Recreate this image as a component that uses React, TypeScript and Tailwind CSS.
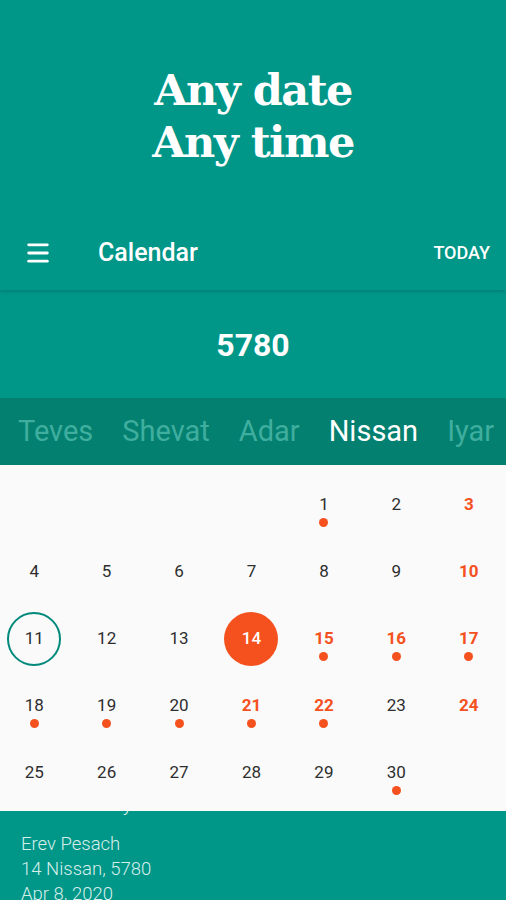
import { Menu } from 'lucide-react';

type Day = { n: number; holiday?: boolean; dot?: boolean; today?: boolean; selected?: boolean };

const weeks: (Day | null)[][] = [
  [null, null, null, null, { n: 1, dot: true }, { n: 2 }, { n: 3, holiday: true }],
  [{ n: 4 }, { n: 5 }, { n: 6 }, { n: 7 }, { n: 8 }, { n: 9 }, { n: 10, holiday: true }],
  [
    { n: 11, today: true },
    { n: 12 },
    { n: 13 },
    { n: 14, selected: true },
    { n: 15, holiday: true, dot: true },
    { n: 16, holiday: true, dot: true },
    { n: 17, holiday: true, dot: true },
  ],
  [
    { n: 18, dot: true },
    { n: 19, dot: true },
    { n: 20, dot: true },
    { n: 21, holiday: true, dot: true },
    { n: 22, holiday: true, dot: true },
    { n: 23 },
    { n: 24, holiday: true },
  ],
  [{ n: 25 }, { n: 26 }, { n: 27 }, { n: 28 }, { n: 29 }, { n: 30, dot: true }, null],
];

const months = [
  { name: 'Teves' },
  { name: 'Shevat' },
  { name: 'Adar' },
  { name: 'Nissan', active: true },
  { name: 'Iyar' },
];

function Cell({ day }: { day: Day | null }) {
  if (!day) return <div className="h-[67px]" />;
  let numCls = 'text-[#2e2e2e]';
  if (day.holiday) numCls = 'text-[#f4511e] font-bold';
  if (day.selected) numCls = 'text-white font-medium';
  return (
    <div className="relative h-[67px] flex items-center justify-center">
      {day.today && <div className="absolute w-[54px] h-[54px] rounded-full border-2 border-[#00897b]" />}
      {day.selected && <div className="absolute w-[54px] h-[54px] rounded-full bg-[#f4511e]" />}
      <span className={`relative text-[17px] leading-none ${numCls}`}>{day.n}</span>
      {day.dot && <span className="absolute top-[47px] w-[9px] h-[9px] rounded-full bg-[#f4511e]" />}
    </div>
  );
}

export default function App() {
  return (
    <div className="w-[506px] h-[900px] overflow-hidden bg-[#009688] font-['Roboto',sans-serif] flex flex-col">
      <section className="h-[225px] flex flex-col items-center justify-center pt-[6px]">
        <h1 className="text-center text-white font-bold font-['DejaVu_Serif',serif] text-[43px] leading-[52px] tracking-[-1.5px]">
          Any date
          <br />
          Any time
        </h1>
      </section>

      <header className="h-[65px] flex items-center px-[24px] pb-[10px] shadow-[0_2px_3px_rgba(0,0,0,0.12)] relative z-10">
        <Menu className="w-[28px] h-[28px] text-white" strokeWidth={2.4} />
        <span className="ml-[46px] text-white text-[25px] font-medium">Calendar</span>
        <span className="ml-auto text-white text-[18px] font-medium mr-[-8px]">TODAY</span>
      </header>

      <div className="h-[108px] flex items-center justify-center pt-[1px]">
        <span className="text-white text-[32px] font-bold">5780</span>
      </div>

      <nav className="h-[67px] bg-[#03806f] flex items-center gap-[29px] px-[18px] whitespace-nowrap">
        {months.map((m) => (
          <span
            key={m.name}
            className={m.active ? 'text-white text-[29px]' : 'text-[#3fae9f] text-[29px]'}
          >
            {m.name}
          </span>
        ))}
      </nav>

      <div className="relative z-10 bg-[#fafafa] pt-[6px] pb-[5px]">
        {weeks.map((w, i) => (
          <div key={i} className="grid grid-cols-7 ml-[-2px] mr-[1px]">
            {w.map((d, j) => (
              <Cell key={j} day={d} />
            ))}
          </div>
        ))}
      </div>

      <section className="flex-1 overflow-hidden px-[21px] text-[#d6efeb] text-[18.5px] font-light leading-[25px]">
        <div className="mt-[-19px] text-[20px]">Selected day</div>
        <div className="mt-[15px]">Erev Pesach</div>
        <div>14 Nissan, 5780</div>
        <div>Apr 8, 2020</div>
      </section>
    </div>
  );
}
